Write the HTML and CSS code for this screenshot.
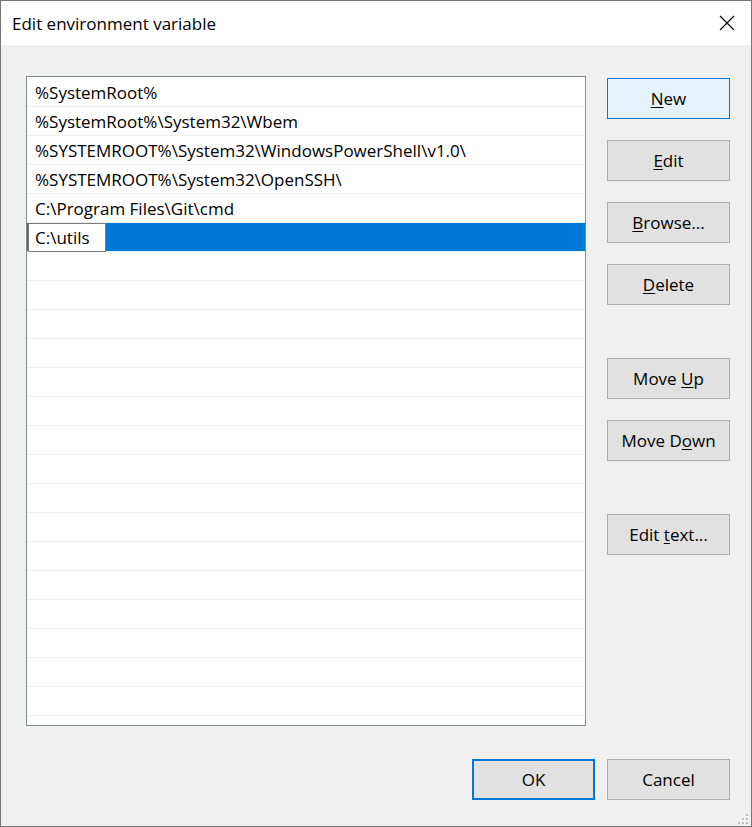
FILE: index.html
```html
<!DOCTYPE html>
<html lang="en">
<head>
<meta charset="utf-8">
<title>Edit environment variable</title>
<link rel="stylesheet" href="styles.css">
</head>
<body>
<div class="window">
  <div class="titlebar">
    <span class="title">Edit environment variable</span>
    <div class="close">
      <svg width="16" height="16" viewBox="0 0 16 16"><path d="M1 1 L15 15 M15 1 L1 15" stroke="#000" stroke-width="1.1" fill="none"/></svg>
    </div>
  </div>
  <div class="client">
    <div class="main">
      <div class="list">
        <div class="row">%SystemRoot%</div>
        <div class="row">%SystemRoot%\System32\Wbem</div>
        <div class="row">%SYSTEMROOT%\System32\WindowsPowerShell\v1.0\</div>
        <div class="row">%SYSTEMROOT%\System32\OpenSSH\</div>
        <div class="row">C:\Program Files\Git\cmd</div>
        <div class="row selected"><div class="editbox">C:\utils</div></div>
        <div class="row"></div><div class="row"></div><div class="row"></div><div class="row"></div>
        <div class="row"></div><div class="row"></div><div class="row"></div><div class="row"></div>
        <div class="row"></div><div class="row"></div><div class="row"></div><div class="row"></div>
        <div class="row"></div><div class="row"></div><div class="row"></div><div class="row"></div>
        <div class="row"></div>
      </div>
      <div class="side">
        <div class="btn hover"><span><u>N</u>ew</span></div>
        <div class="btn"><span><u>E</u>dit</span></div>
        <div class="btn"><span><u>B</u>rowse...</span></div>
        <div class="btn"><span><u>D</u>elete</span></div>
        <div class="btn spaced"><span>Move <u>U</u>p</span></div>
        <div class="btn"><span>Move D<u>o</u>wn</span></div>
        <div class="btn spaced"><span>Edit <u>t</u>ext...</span></div>
      </div>
    </div>
    <div class="footer">
      <div class="btn default"><span>OK</span></div>
      <div class="btn"><span>Cancel</span></div>
    </div>
    <svg class="grip" width="12" height="12" viewBox="0 0 12 12">
      <rect x="8" y="0" width="2" height="2" fill="#bcbcbc"/>
      <rect x="4" y="4" width="2" height="2" fill="#bcbcbc"/>
      <rect x="8" y="4" width="2" height="2" fill="#bcbcbc"/>
      <rect x="0" y="8" width="2" height="2" fill="#bcbcbc"/>
      <rect x="4" y="8" width="2" height="2" fill="#bcbcbc"/>
      <rect x="8" y="8" width="2" height="2" fill="#bcbcbc"/>
    </svg>
  </div>
</div>
</body>
</html>
```

FILE: styles.css
```css
html, body {
  margin: 0;
  padding: 0;
  overflow: hidden;
}
body {
  font-family: "Open Sans", "Noto Sans", "Liberation Sans", sans-serif;
  color: #000;
  background: #f0f0f0;
}
.window {
  box-sizing: border-box;
  width: 752px;
  height: 827px;
  border: 1px solid #777777;
  display: flex;
  flex-direction: column;
  background: #f0f0f0;
}
.titlebar {
  height: 44px;
  flex: none;
  background: #fff;
  display: flex;
  align-items: center;
  justify-content: space-between;
  padding-left: 11px;
}
.title {
  font-size: 17px;
}
.close {
  width: 46px;
  height: 44px;
  display: flex;
  align-items: center;
  justify-content: center;
  margin-right: 1px;
}
.client {
  position: relative;
  flex: 1;
  padding: 31px 21px 0 25px;
}
.main {
  display: flex;
  gap: 21px;
}
.list {
  box-sizing: border-box;
  width: 560px;
  height: 650px;
  border: 1px solid #828790;
  background: #fff;
  padding-top: 1px;
  overflow: hidden;
}
.row {
  box-sizing: border-box;
  height: 29px;
  border-bottom: 1px solid #f0f0f0;
  padding-left: 8px;
  font-size: 17px;
  line-height: 29px;
  white-space: nowrap;
}
.row.selected {
  background: #0078d7;
  padding-left: 1px;
  display: flex;
}
.editbox {
  box-sizing: border-box;
  width: 78px;
  height: 29px;
  border: 1px solid #7a7a7a;
  background: #fff;
  padding-left: 6px;
  line-height: 27px;
}
.side {
  display: flex;
  flex-direction: column;
  gap: 21px;
  margin-top: 2px;
}
.btn {
  box-sizing: border-box;
  width: 123px;
  height: 41px;
  border: 1px solid #adadad;
  background: #e1e1e1;
  display: flex;
  align-items: center;
  justify-content: center;
  font-size: 17px;
  white-space: pre;
}
.btn u {
  text-decoration-thickness: 1px;
  text-underline-offset: 2px;
}
.btn.hover {
  background: #e5f1fb;
  border-color: #0078d7;
}
.btn.spaced {
  margin-top: 32px;
}
.btn.default {
  border: 2px solid #0078d7;
}
.footer {
  display: flex;
  justify-content: flex-end;
  gap: 12px;
  margin-top: 33px;
}
.grip {
  position: absolute;
  right: 1px;
  bottom: 0px;
}
```
